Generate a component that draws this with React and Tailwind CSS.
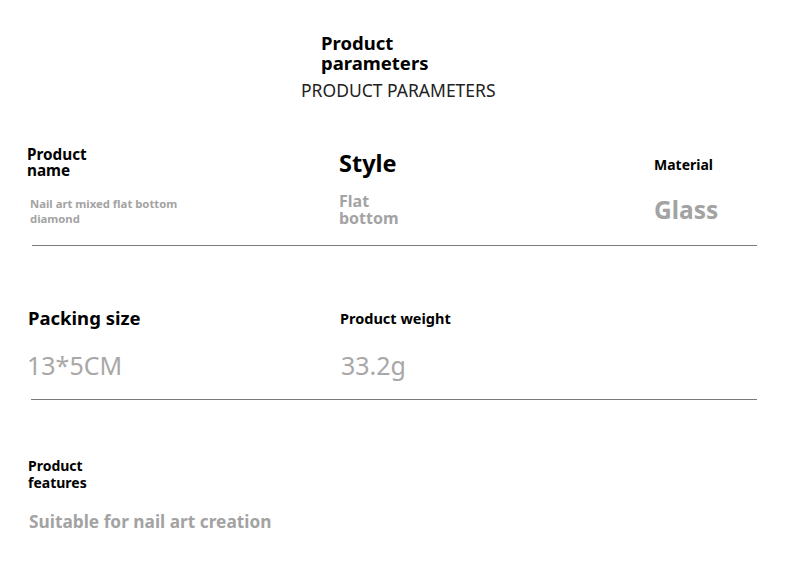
import React from "react";

const font = { fontFamily: '"Noto Sans", "Noto Sans CJK SC", sans-serif' };

const Divider = ({ className = "" }) => (
  <div className={`h-px bg-[#7a7a7a] ${className}`} />
);

export default function App() {
  return (
    <div className="w-[800px] h-[580px] bg-white text-black overflow-hidden" style={font}>
      <header className="pt-[33px]">
        <h1 className="pl-[321px] text-[18.5px] font-bold leading-[20px]">
          Product
          <br />
          parameters
        </h1>
        <p className="pl-[301px] mt-[6px] text-[17.5px] leading-[22px] text-[#222]">
          PRODUCT PARAMETERS
        </p>
      </header>

      <section className="mt-[45px] pl-[27px] pr-[43px]">
        <div className="grid grid-cols-[312px_315px_1fr] items-start">
          <div className="text-[15.3px] font-bold leading-[16px]">
            Product
            <br />
            name
          </div>
          <div className="pt-[2px] text-[23.5px] font-bold leading-[30px]">Style</div>
          <div className="pt-[10px] text-[14px] font-bold leading-[18px]">Material</div>

          <div className="pt-[18px] pl-[3px] text-[11.3px] font-bold leading-[15px] text-[#a3a3a3]">
            Nail art mixed flat bottom
            <br />
            diamond
          </div>
          <div className="pt-[15px] text-[16px] font-bold leading-[17px] text-[#a3a3a3]">
            Flat
            <br />
            bottom
          </div>
          <div className="pt-[17px] text-[24.5px] font-bold leading-[30px] text-[#a3a3a3]">Glass</div>
        </div>
        <Divider className="mt-[18px] ml-[5px]" />
      </section>

      <section className="mt-[60px] pl-[27px] pr-[43px]">
        <div className="grid grid-cols-[313px_1fr] items-start">
          <div className="pl-[1px] text-[18.5px] font-bold leading-[24px]">Packing size</div>
          <div className="text-[14.5px] font-bold leading-[24px]">Product weight</div>
          <div className="pt-[18px] text-[25px] leading-[34px] text-[#a8a8a8]">13*5CM</div>
          <div className="pt-[18px] pl-[1px] text-[25px] leading-[34px] text-[#a8a8a8]">33.2g</div>
        </div>
        <Divider className="mt-[17px] ml-[4px]" />
      </section>

      <section className="mt-[57px] pl-[28px]">
        <div className="text-[14px] font-bold leading-[17px]">
          Product
          <br />
          features
        </div>
        <p className="mt-[20px] pl-[1px] text-[17.3px] font-bold leading-[22px] text-[#a3a3a3]">
          Suitable for nail art creation
        </p>
      </section>
    </div>
  );
}
